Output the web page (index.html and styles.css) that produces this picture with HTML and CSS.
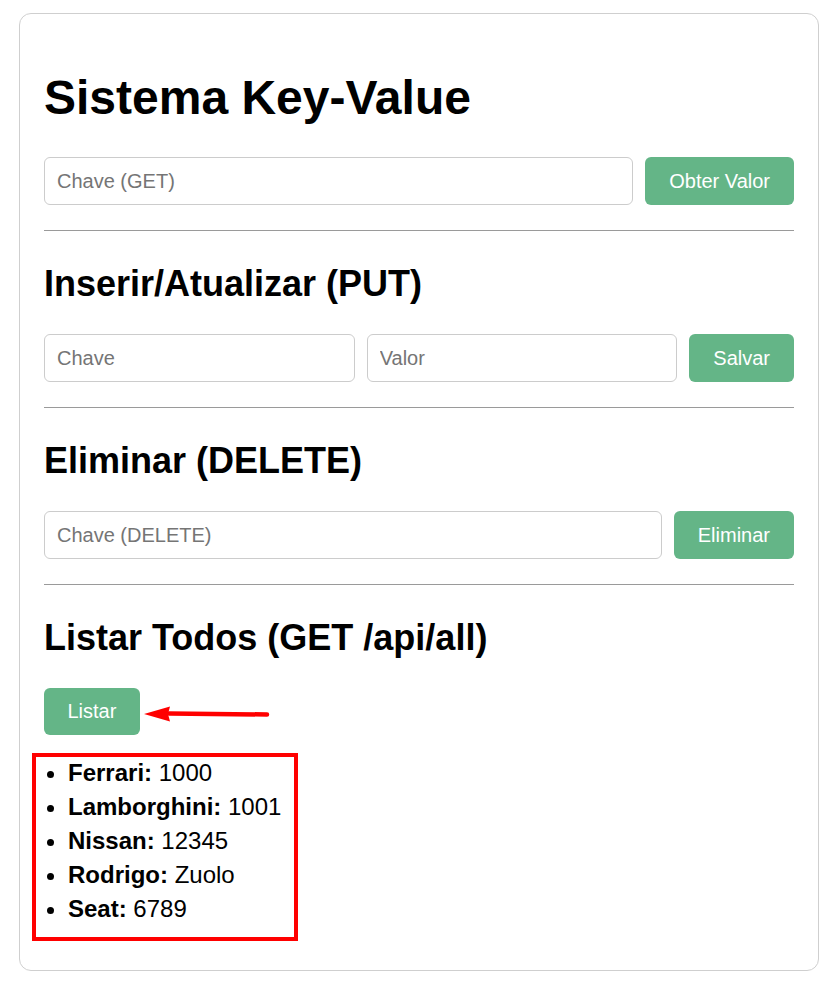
FILE: index.html
```html
<!DOCTYPE html>
<html lang="pt">
<head>
<meta charset="utf-8">
<title>Sistema Key-Value</title>
<link rel="stylesheet" href="styles.css">
</head>
<body>
<div class="card">
  <h1>Sistema Key-Value</h1>
  <div class="row">
    <input class="field" type="text" placeholder="Chave (GET)">
    <button class="btn">Obter Valor</button>
  </div>
  <hr>
  <h2>Inserir/Atualizar (PUT)</h2>
  <div class="row">
    <input class="field" type="text" placeholder="Chave">
    <input class="field" type="text" placeholder="Valor">
    <button class="btn">Salvar</button>
  </div>
  <hr>
  <h2>Eliminar (DELETE)</h2>
  <div class="row">
    <input class="field" type="text" placeholder="Chave (DELETE)">
    <button class="btn">Eliminar</button>
  </div>
  <hr>
  <h2>Listar Todos (GET /api/all)</h2>
  <button class="btn btn-list">Listar</button>
  <ul class="list">
    <li><strong>Ferrari:</strong> 1000</li>
    <li><strong>Lamborghini:</strong> 1001</li>
    <li><strong>Nissan:</strong> 12345</li>
    <li><strong>Rodrigo:</strong> Zuolo</li>
    <li><strong>Seat:</strong> 6789</li>
  </ul>
  <div class="mark-box"></div>
  <svg class="mark-arrow" width="130" height="20" viewBox="0 0 130 20">
    <path d="M28 9.5 L126 10.5" stroke="#f00" stroke-width="4.5" stroke-linecap="round" fill="none"/>
    <path d="M3 10 L29 2.5 L27 10 L29 17.5 Z" fill="#f00"/>
  </svg>
</div>
</body>
</html>
```
FILE: styles.css
```css
* { box-sizing: border-box; }
body {
  margin: 0;
  background: #fff;
  font-family: "Liberation Sans", Arial, sans-serif;
  color: #000;
}
.card {
  position: relative;
  width: 800px;
  margin: 13px 0 0 19px;
  padding: 24px;
  border: 1px solid #cfcfcf;
  border-radius: 12px;
  background: #fff;
}
h1 {
  font-size: 48px;
  line-height: 55px;
  font-weight: bold;
  margin: 32px 0 32px;
}
h2 {
  font-size: 36px;
  line-height: 41px;
  font-weight: bold;
  margin: 32px 0 30px;
}
.row {
  display: flex;
  gap: 12px;
  height: 48px;
}
.field {
  flex: 1 1 0;
  min-width: 0;
  height: 48px;
  padding: 0 12px;
  border: 1px solid #cccccc;
  border-radius: 6px;
  font-family: "Liberation Sans", Arial, sans-serif;
  font-size: 20px;
  color: #000;
  background: #fff;
  outline: none;
}
.field::placeholder { color: #757575; }
.btn {
  flex: none;
  height: 48px;
  padding: 0 24px;
  border: none;
  border-radius: 6px;
  background: #64b587;
  color: #fff;
  font-family: "Liberation Sans", Arial, sans-serif;
  font-size: 20px;
}
.btn-list {
  display: block;
  height: 47px;
  padding: 0 23.5px;
}
hr {
  border: none;
  border-top: 1px solid #9a9a9a;
  margin: 25px 0 0;
}
.list {
  margin: 21px 0 20px;
  padding-left: 24px;
  font-size: 24px;
  line-height: 34px;
}
.mark-box {
  position: absolute;
  left: 12px;
  top: 739px;
  width: 266px;
  height: 188px;
  border: 4px solid #f00;
}
.mark-arrow {
  position: absolute;
  left: 121px;
  top: 690px;
}
```
